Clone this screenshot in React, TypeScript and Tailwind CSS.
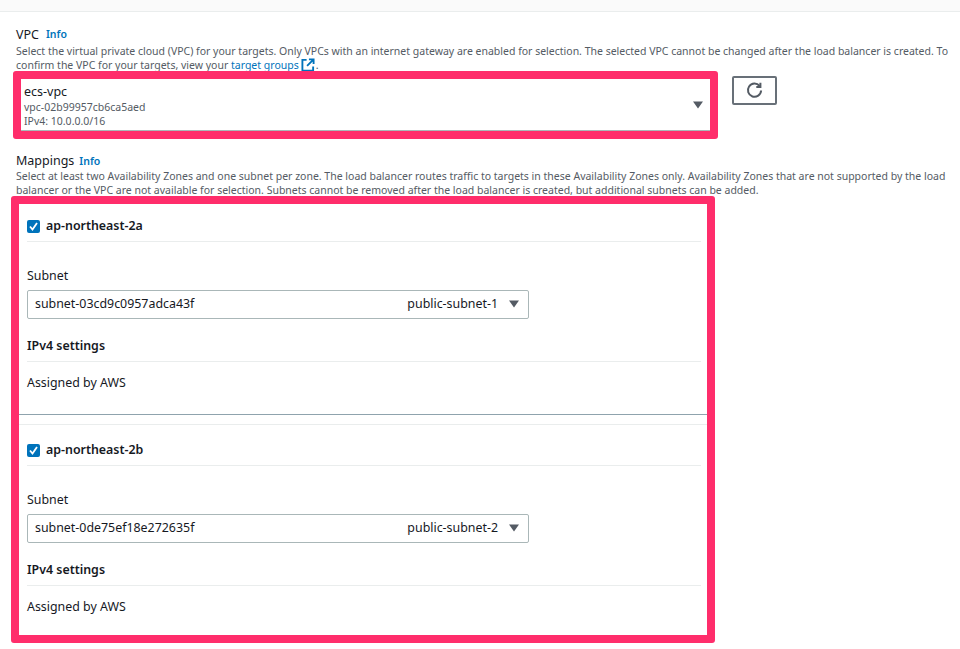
const font = { fontFamily: '"Noto Sans", "Open Sans", sans-serif' };

function Caret() {
  return (
    <svg width="12" height="8" viewBox="0 0 12 8" className="shrink-0">
      <path d="M1 0.5 H11 L6 7.5 Z" fill="#545b64" />
    </svg>
  );
}

function ExternalIcon() {
  return (
    <svg width="14" height="14" viewBox="0 0 15 15" fill="none" stroke="#0073bb" strokeWidth="2" className="ml-[2px] mr-[1px] inline-block align-[-3px]">
      <path d="M6 2 H1.5 V13.5 H13 V9" />
      <path d="M8.5 1.5 H13.5 V6.5 M13.5 1.5 L6.5 8.5" />
    </svg>
  );
}

function RefreshIcon() {
  return (
    <svg width="17" height="17" viewBox="0 0 17 17" fill="none" stroke="#545b64" strokeWidth="2">
      <path d="M13.6 4 A6.6 6.6 0 1 0 15.1 8.5" />
      <path d="M14.4 0.8 V4.9 H10.3" />
    </svg>
  );
}

function Checkbox() {
  return (
    <span className="flex h-[13px] w-[13px] items-center justify-center rounded-[2px] bg-[#0073bb]">
      <svg width="11" height="11" viewBox="0 0 11 11" fill="none" stroke="#ffffff" strokeWidth="1.8">
        <path d="M2 5.5 L4.5 8.5 L9 2" />
      </svg>
    </span>
  );
}

function Zone({ name, subnet, label }: { name: string; subnet: string; label: string }) {
  return (
    <div className="pl-2 pr-[6px]">
      <div className="flex h-[37px] items-center gap-[6px] border-b border-[#eaeded] pt-[7px]">
        <Checkbox />
        <span className="text-[12.4px] font-semibold text-[#16191f]">{name}</span>
      </div>
      <div className="mt-[26px] flex h-[17px] items-center text-[12.4px] text-[#16191f]">Subnet</div>
      <div className="mt-[5px] flex h-[29px] w-[502px] items-center justify-between rounded-[2px] border border-[#aab7b8] pl-[7px] pr-[8px] text-[12.4px] text-[#16191f]">
        <span>{subnet}</span>
        <span className="flex items-center gap-[10px]">
          {label}
          <Caret />
        </span>
      </div>
      <div className="mt-[19px] flex h-[17px] items-center text-[12.4px] font-semibold text-[#16191f]">IPv4 settings</div>
      <div className="mt-[6px] border-t border-[#eaeded]" />
      <div className="mt-[13px] flex h-[17px] items-center text-[12.4px] text-[#16191f]">Assigned by AWS</div>
    </div>
  );
}

export default function App() {
  return (
    <div className="h-[649px] w-[960px] overflow-hidden bg-white" style={font}>
      <div className="h-[12px] border-b border-[#eaeded] bg-[#fafafa]" />
      <div className="mt-[12px] flex h-[19px] items-center gap-[7px] pl-4 pt-[3px] text-[12.5px] text-[#16191f]">
        VPC <span className="text-[10.5px] font-semibold text-[#0073bb]">Info</span>
      </div>
      <p className="pl-4 pr-2 pt-[1px] text-[10.5px] leading-[14px] text-[#545b64]">
        Select the virtual private cloud (VPC) for your targets. Only VPCs with an internet gateway are enabled for selection. The selected VPC cannot be changed after the load balancer is created. To confirm the VPC for your targets, view your <span className="text-[#0073bb]">target groups</span>
        <ExternalIcon />.
      </p>
      <div className="mt-[-1px] flex items-start gap-[14px] pl-[13px]">
        <div className="h-[68px] w-[705px] rounded-[3px] border-8 border-[#ff2d6b]">
          <div className="flex h-[52px] items-center justify-between border-b border-[#aab7b8] pl-[3px] pr-[6px] pt-[3px]">
            <div className="text-[10.5px] leading-[14px] text-[#545b64]">
              <div className="mb-[1px] text-[12.5px] leading-[15px] text-[#16191f]">ecs-vpc</div>
              <div>vpc-02b99957cb6ca5aed</div>
              <div>IPv4: 10.0.0.0/16</div>
            </div>
            <div className="mb-[2px] flex">
              <Caret />
            </div>
          </div>
        </div>
        <button className="mt-[5px] flex h-[29px] w-[45px] items-center justify-center rounded-[2px] border-2 border-[#687078]">
          <RefreshIcon />
        </button>
      </div>
      <div className="mt-[13px] flex h-[19px] items-center gap-[5px] pl-4 text-[12.5px] text-[#16191f]">
        Mappings <span className="text-[10.5px] font-semibold text-[#0073bb]">Info</span>
      </div>
      <p className="mt-[-2px] pl-4 pr-2 text-[10.5px] leading-[14px] text-[#545b64]">
        Select at least two Availability Zones and one subnet per zone. The load balancer routes traffic to targets in these Availability Zones only. Availability Zones that are not supported by the load balancer or the VPC are not available for selection. Subnets cannot be removed after the load balancer is created, but additional subnets can be added.
      </p>
      <div className="ml-[11px] mt-[-1px] h-[447px] w-[704px] rounded-[3px] border-8 border-[#ff2d6b] pt-[1px]">
        <Zone name="ap-northeast-2a" subnet="subnet-03cd9c0957adca43f" label="public-subnet-1" />
        <div className="mt-[22px] border-t border-[#8fa3ad]" />
        <div className="mb-[4px] mt-[9px] border-t border-[#eaeded]" />
        <Zone name="ap-northeast-2b" subnet="subnet-0de75ef18e272635f" label="public-subnet-2" />
      </div>
    </div>
  );
}
